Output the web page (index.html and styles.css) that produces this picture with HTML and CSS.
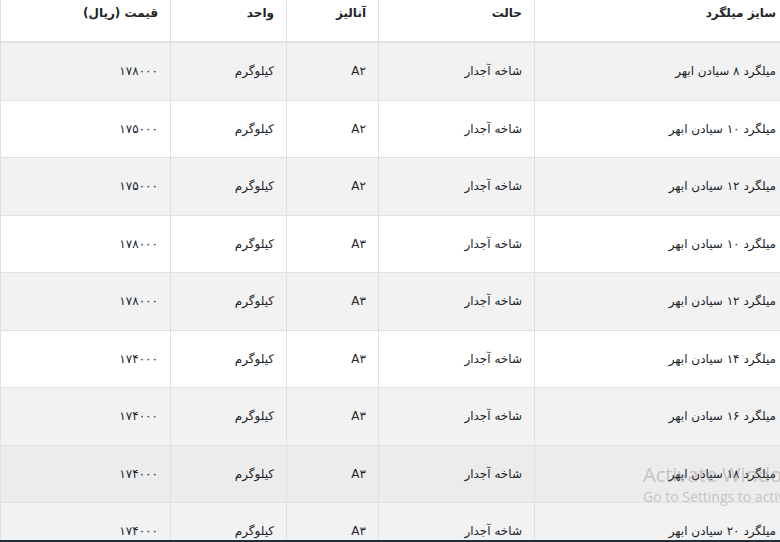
FILE: index.html
```html
<!DOCTYPE html>
<html lang="fa">
<head>
<meta charset="utf-8">
<link rel="stylesheet" href="styles.css">
</head>
<body>
<div class="wrap">
<table class="price-table" dir="rtl">
<colgroup>
<col class="c1"><col class="c2"><col class="c3"><col class="c4"><col class="c5">
</colgroup>
<thead>
<tr><th>سایز میلگرد</th><th>حالت</th><th>آنالیز</th><th>واحد</th><th>قیمت (ریال)</th></tr>
</thead>
<tbody>
<tr class="odd"><td>میلگرد ۸ سیادن ابهر</td><td>شاخه آجدار</td><td>A۲</td><td>کیلوگرم</td><td>۱۷۸۰۰۰</td></tr>
<tr><td>میلگرد ۱۰ سیادن ابهر</td><td>شاخه آجدار</td><td>A۲</td><td>کیلوگرم</td><td>۱۷۵۰۰۰</td></tr>
<tr class="odd"><td>میلگرد ۱۲ سیادن ابهر</td><td>شاخه آجدار</td><td>A۲</td><td>کیلوگرم</td><td>۱۷۵۰۰۰</td></tr>
<tr><td>میلگرد ۱۰ سیادن ابهر</td><td>شاخه آجدار</td><td>A۳</td><td>کیلوگرم</td><td>۱۷۸۰۰۰</td></tr>
<tr class="odd"><td>میلگرد ۱۲ سیادن ابهر</td><td>شاخه آجدار</td><td>A۳</td><td>کیلوگرم</td><td>۱۷۸۰۰۰</td></tr>
<tr><td>میلگرد ۱۴ سیادن ابهر</td><td>شاخه آجدار</td><td>A۳</td><td>کیلوگرم</td><td>۱۷۴۰۰۰</td></tr>
<tr class="odd"><td>میلگرد ۱۶ سیادن ابهر</td><td>شاخه آجدار</td><td>A۳</td><td>کیلوگرم</td><td>۱۷۴۰۰۰</td></tr>
<tr class="hover"><td>میلگرد ۱۸ سیادن ابهر</td><td>شاخه آجدار</td><td>A۳</td><td>کیلوگرم</td><td>۱۷۴۰۰۰</td></tr>
<tr class="odd"><td>میلگرد ۲۰ سیادن ابهر</td><td>شاخه آجدار</td><td>A۳</td><td>کیلوگرم</td><td>۱۷۴۰۰۰</td></tr>
</tbody>
</table>
</div>
<div class="watermark">
<div class="wm-title">Activate Windows</div>
<div class="wm-sub">Go to Settings to activate Windows.</div>
</div>
<div class="taskbar"></div>
</body>
</html>
```
FILE: styles.css
```css
html, body {
  margin: 0;
  padding: 0;
  background: #fff;
  overflow: hidden;
}
body {
  width: 780px;
  height: 542px;
  font-family: "DejaVu Sans", "Noto Sans", sans-serif;
  color: #212529;
}
.wrap {
  width: 780px;
  height: 542px;
  overflow: hidden;
  direction: ltr;
}
.price-table {
  width: 788px;
  border-collapse: collapse;
  table-layout: fixed;
  font-size: 12px;
}
.c1 { width: 254px; }
.c2 { width: 156px; }
.c3 { width: 92px; }
.c4 { width: 116px; }
.c5 { width: 170px; }
.price-table th,
.price-table td {
  text-align: right;
  border-left: 1px solid #dee2e6;
  border-right: 1px solid #dee2e6;
  white-space: nowrap;
  overflow: hidden;
}
.price-table th {
  font-weight: bold;
  padding: 1px 12px 16px;
  line-height: 24px;
  border-bottom: 2px solid #dee2e6;
  background: #fff;
}
.price-table td {
  padding: 16px 12px;
  line-height: 24.5px;
  border-top: 1px solid #dee2e6;
}
.price-table tbody tr:first-child td { border-top: 0; }
.price-table tr.odd td { background: #f2f2f2; }
.price-table tr.hover td { background: #ececec; }
.watermark {
  position: absolute;
  left: 643px;
  top: 462px;
  width: 137px;
  overflow: hidden;
  white-space: nowrap;
  font-family: "Open Sans", "Noto Sans", sans-serif;
  color: rgba(130, 130, 130, 0.4);
  pointer-events: none;
}
.wm-title {
  font-size: 20px;
  line-height: 26px;
}
.wm-sub {
  font-size: 14px;
  line-height: 18px;
}
.taskbar {
  position: fixed;
  left: 0;
  right: 0;
  bottom: 0;
  height: 2px;
  background: #1f2e38;
}
```
